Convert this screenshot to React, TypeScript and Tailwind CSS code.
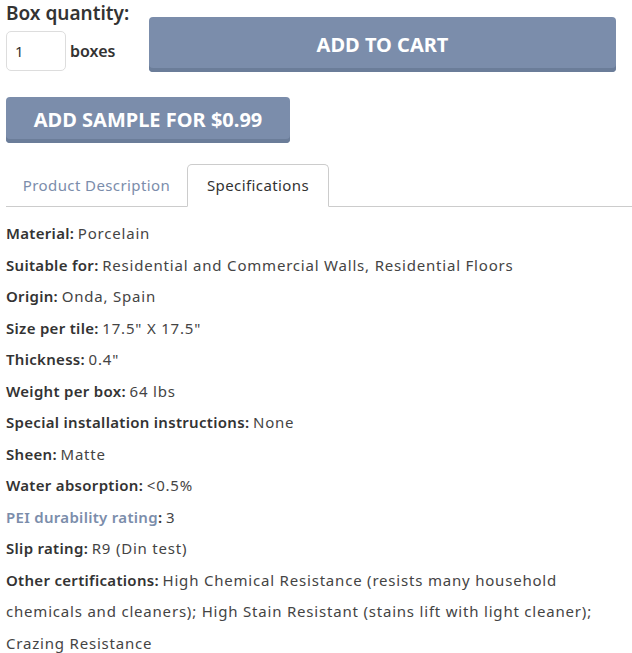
import React from 'react'

const specs: { label: string; value: string; link?: boolean }[] = [
  { label: 'Material', value: 'Porcelain' },
  { label: 'Suitable for', value: 'Residential and Commercial Walls, Residential Floors' },
  { label: 'Origin', value: 'Onda, Spain' },
  { label: 'Size per tile', value: '17.5" X 17.5"' },
  { label: 'Thickness', value: '0.4"' },
  { label: 'Weight per box', value: '64 lbs' },
  { label: 'Special installation instructions', value: 'None' },
  { label: 'Sheen', value: 'Matte' },
  { label: 'Water absorption', value: '<0.5%' },
  { label: 'PEI durability rating', value: '3', link: true },
  { label: 'Slip rating', value: 'R9 (Din test)' },
  {
    label: 'Other certifications',
    value:
      'High Chemical Resistance (resists many household chemicals and cleaners); High Stain Resistant (stains lift with light cleaner); Crazing Resistance',
  },
]

export default function App() {
  return (
    <div className="w-[632px] h-[653px] overflow-hidden bg-white text-[#333] font-['Noto_Sans',sans-serif]">
      {/* quantity + cart */}
      <div className="flex pl-[6px] pr-[16px]">
        <div className="w-[143px] shrink-0">
          <div className="text-[19px] font-semibold leading-[26px] text-[#333]">Box quantity:</div>
          <div className="flex items-center mt-[5px]">
            <input
              defaultValue="1"
              className="w-[60px] h-[40px] border border-[#ddd] rounded-[5px] px-[8px] text-[15px] text-[#333] outline-none"
            />
            <span className="ml-[4px] text-[16px] font-semibold text-[#333]">boxes</span>
          </div>
        </div>
        <button className="mt-[17px] flex-1 h-[55px] rounded-[4px] bg-[#7b8dab] shadow-[inset_0_-4px_0_#6b7d99] text-white text-[20px] font-bold">
          ADD TO CART
        </button>
      </div>

      <div className="pl-[6px] mt-[25px]">
        <button className="w-[284px] h-[46px] rounded-[4px] bg-[#7b8dab] shadow-[inset_0_-4px_0_#6b7d99] text-white text-[20px] font-bold">
          ADD SAMPLE FOR $0.99
        </button>
      </div>

      {/* tabs */}
      <div className="ml-[6px] mt-[21px] flex border-b border-[#ccc] h-[43px]">
        <div className="w-[181px] flex items-center justify-center text-[15px] tracking-[0.4px] text-[#7b8dab]">
          Product Description
        </div>
        <div className="w-[142px] -mb-px bg-white border border-[#ccc] border-b-white rounded-t-[5px] flex items-center justify-center text-[15px] tracking-[0.4px] text-[#333]">
          Specifications
        </div>
      </div>

      {/* specs */}
      <div className="px-[6px] pt-[11px] text-[15px] leading-[31.5px]">
        {specs.map((s) => (
          <p key={s.label}>
            <b className={s.link ? 'font-semibold tracking-[0.3px] text-[#7b8dab]' : 'font-semibold tracking-[0.3px] text-[#333]'}>
              {s.label}
            </b>
            <b className="font-semibold text-[#333]">:</b>{' '}
            <span className="tracking-[0.8px] text-[#444]">{s.value}</span>
          </p>
        ))}
      </div>
    </div>
  )
}
